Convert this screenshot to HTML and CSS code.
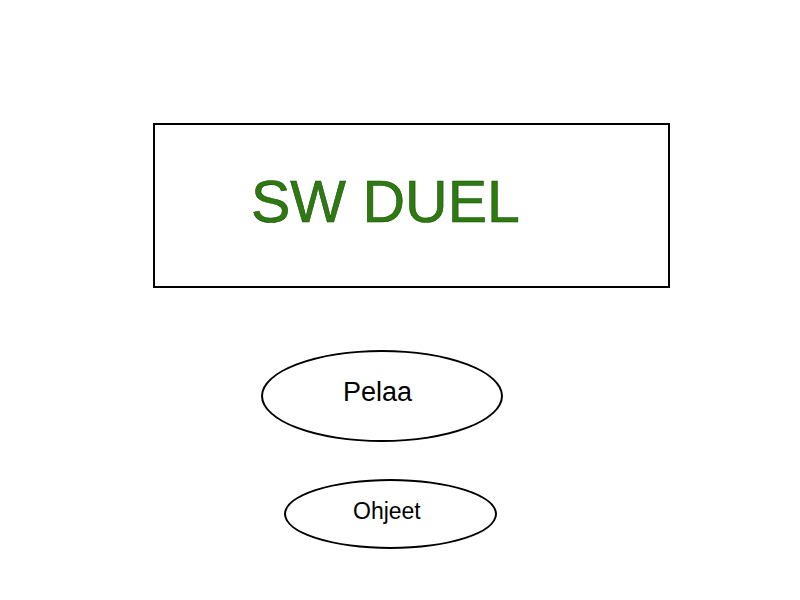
FILE: index.html
```html
<!DOCTYPE html>
<html lang="fi">
<head>
<meta charset="utf-8">
<title>SW DUEL</title>
<link rel="stylesheet" href="styles.css">
</head>
<body>
<main class="page">
  <header class="title-box">
    <h1 class="title">SW DUEL</h1>
  </header>
  <div class="menu">
    <button class="oval oval-play">Pelaa</button>
    <button class="oval oval-help">Ohjeet</button>
  </div>
</main>
</body>
</html>
```

FILE: styles.css
```css
html, body {
  margin: 0;
  padding: 0;
  background: #ffffff;
}

.page {
  width: 800px;
  height: 600px;
  box-sizing: border-box;
  padding-top: 123px;
  padding-left: 153px;
  font-family: "Liberation Sans", Arial, sans-serif;
}

.title-box {
  width: 513px;
  height: 161px;
  border: 2px solid #000000;
}

.title {
  margin: 0;
  padding-top: 48px;
  padding-left: 96px;
  font-size: 59px;
  line-height: 59px;
  font-weight: normal;
  color: #2c7a10;
  -webkit-text-stroke: 0.6px #1d4d0a;
}

.menu {
  display: flex;
  flex-direction: column;
  align-items: flex-start;
}

.oval {
  display: flex;
  align-items: flex-start;
  box-sizing: border-box;
  border: 2px solid #000000;
  border-radius: 50%;
  background: #ffffff;
  color: #000000;
  font-family: "Liberation Sans", Arial, sans-serif;
  font-weight: normal;
  text-align: left;
  margin: 0;
}

.oval-play {
  margin-top: 62px;
  margin-left: 108px;
  width: 242px;
  height: 92px;
  padding: 27px 0 0 80px;
  font-size: 27px;
  line-height: 27px;
}

.oval-help {
  margin-top: 37px;
  margin-left: 131px;
  width: 213px;
  height: 70px;
  padding: 19px 0 0 67px;
  font-size: 23px;
  line-height: 23px;
}
```
